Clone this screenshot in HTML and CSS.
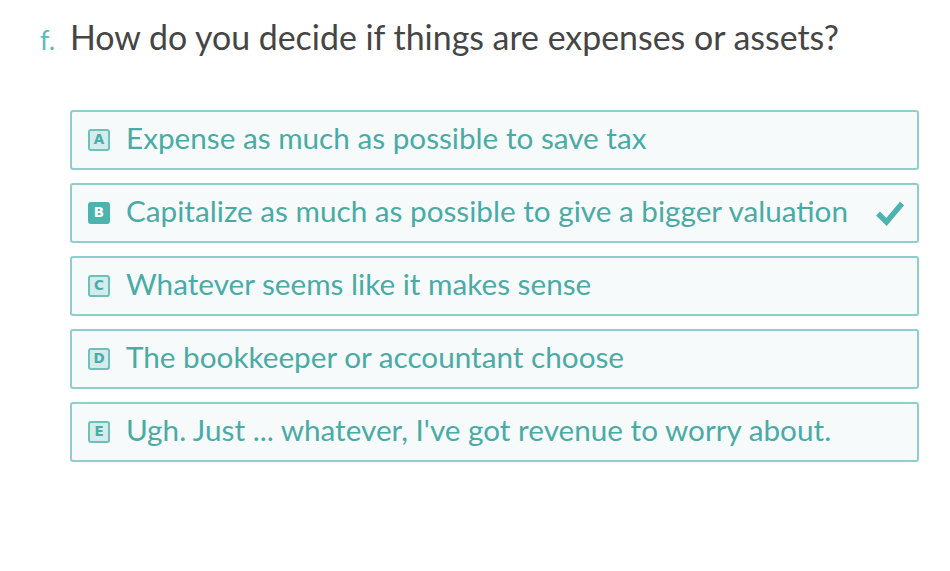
FILE: index.html
```html
<!DOCTYPE html>
<html>
<head>
<meta charset="utf-8">
<link rel="stylesheet" href="styles.css">
</head>
<body>
<div class="question">
  <h1 class="title"><span class="num">f.</span><span class="qtext">How do you decide if things are expenses or assets?</span></h1>
  <ul class="options">
    <li class="option"><span class="badge">A</span><span class="label">Expense as much as possible to save tax</span></li>
    <li class="option selected"><span class="badge">B</span><span class="label">Capitalize as much as possible to give a bigger valuation</span>
      <svg class="check" width="30" height="26" viewBox="0 0 30 26"><path d="M3 13.5 L11.5 22 L27 3.5" fill="none" stroke="#4db3ae" stroke-width="5.5"/></svg></li>
    <li class="option"><span class="badge">C</span><span class="label">Whatever seems like it makes sense</span></li>
    <li class="option"><span class="badge">D</span><span class="label">The bookkeeper or accountant choose</span></li>
    <li class="option"><span class="badge">E</span><span class="label">Ugh. Just ... whatever, I've got revenue to worry about.</span></li>
  </ul>
</div>
</body>
</html>
```
FILE: styles.css
```css
html, body {
  margin: 0;
  padding: 0;
  background: #ffffff;
  font-family: Lato, "Open Sans", sans-serif;
}
.question {
  padding: 14px 31px 0 40px;
}
.title {
  margin: 0;
  font-weight: 400;
  font-size: 33.9px;
  line-height: 46px;
  color: #454545;
  display: flex;
  align-items: baseline;
}
.num {
  color: #5bbcb8;
  font-size: 27px;
  width: 30px;
}
.options {
  list-style: none;
  margin: 47px 0 0 30px;
  padding: 0;
  display: flex;
  flex-direction: column;
  gap: 13px;
}
.option {
  height: 56px;
  border: 2px solid #8ecfcb;
  border-radius: 3px;
  background: #f6fafb;
  display: flex;
  align-items: center;
  padding: 0 12px 0 16px;
  color: #4aaba6;
  font-size: 29.7px;
}
.badge {
  width: 18px;
  height: 18px;
  border: 2px solid #6fbfba;
  border-radius: 3px;
  background: #d4ecec;
  color: #4aaba6;
  font-family: "DejaVu Sans", sans-serif;
  font-size: 13.5px;
  font-weight: 700;
  line-height: 1;
  display: flex;
  align-items: center;
  justify-content: center;
  margin-right: 16px;
  flex: none;
}
.selected .badge {
  background: #4db3ae;
  border-color: #4db3ae;
  color: #ffffff;
}
.label {
  flex: 1;
  white-space: nowrap;
  padding-bottom: 5px;
}
.check {
  flex: none;
}
```
